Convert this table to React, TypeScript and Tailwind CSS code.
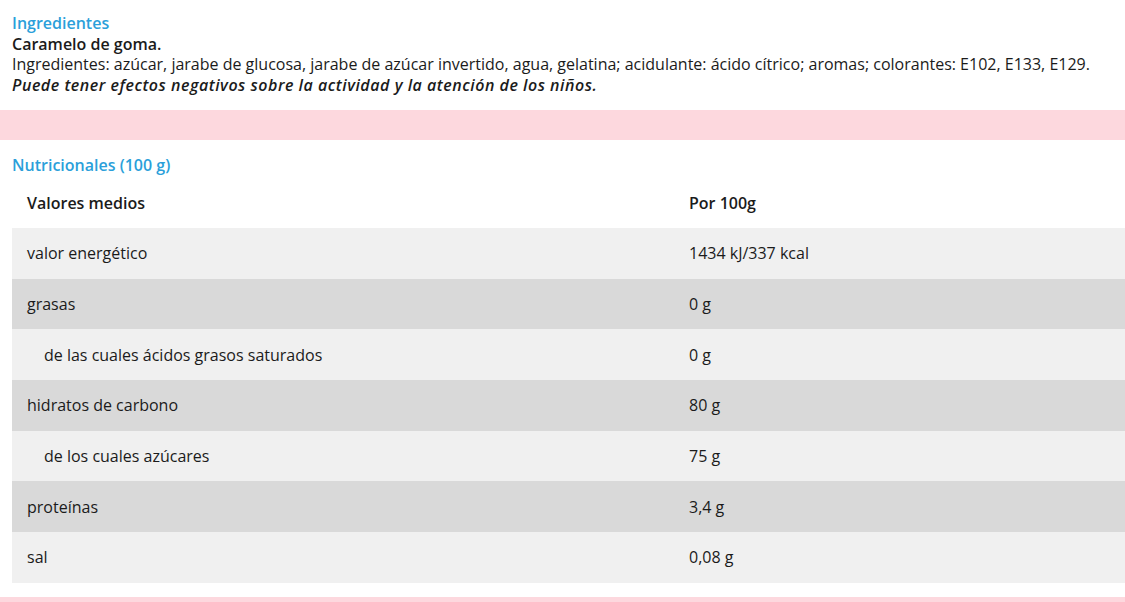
const rows = [
  { label: 'valor energético', value: '1434 kJ/337 kcal', sub: false },
  { label: 'grasas', value: '0 g', sub: false },
  { label: 'de las cuales ácidos grasos saturados', value: '0 g', sub: true },
  { label: 'hidratos de carbono', value: '80 g', sub: false },
  { label: 'de los cuales azúcares', value: '75 g', sub: true },
  { label: 'proteínas', value: '3,4 g', sub: false },
  { label: 'sal', value: '0,08 g', sub: false },
];

export default function App() {
  return (
    <div className="h-[602px] w-[1125px] overflow-hidden bg-white font-['Open_Sans','Noto_Sans',sans-serif] text-[16px] text-[#1b1b1b]">
      <section className="px-3 pt-[13px] leading-[20.5px]">
        <h3 className="font-semibold text-[#2b9fda]">Ingredientes</h3>
        <p className="font-semibold">Caramelo de goma.</p>
        <p className="whitespace-nowrap">
          Ingredientes: azúcar, jarabe de glucosa, jarabe de azúcar invertido, agua, gelatina; acidulante: ácido
          cítrico; aromas; colorantes: E102, E133, E129.
        </p>
        <p className="font-semibold italic tracking-[0.52px]">
          Puede tener efectos negativos sobre la actividad y la atención de los niños.
        </p>
      </section>

      <div className="mt-[15px] h-[30px] bg-[#fdd8de]" />

      <section className="pl-3 pt-[15px]">
        <h3 className="font-semibold leading-[20px] text-[#2b9fda]">Nutricionales (100 g)</h3>
        <div className="mt-[2px] grid grid-cols-[662px_1fr] font-semibold">
          <div className="flex h-[51px] items-center px-[15px]">Valores medios</div>
          <div className="flex h-[51px] items-center px-[15px]">Por 100g</div>
        </div>
        {rows.map((r, i) => (
          <div
            key={r.label}
            className={`grid h-[50.7px] grid-cols-[662px_1fr] items-center ${i % 2 === 0 ? 'bg-[#f0f0f0]' : 'bg-[#d9d9d9]'}`}
          >
            <div className={r.sub ? 'pl-[32px]' : 'pl-[15px]'}>{r.label}</div>
            <div className="pl-[15px]">{r.value}</div>
          </div>
        ))}
      </section>

      <div className="mt-[14px] h-[30px] bg-[#fdd8de]" />
    </div>
  );
}
